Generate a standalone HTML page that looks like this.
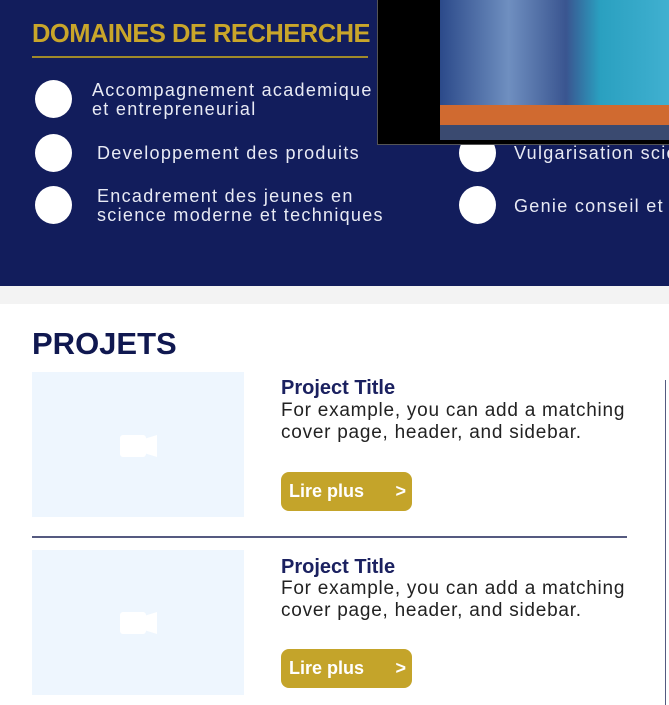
<!DOCTYPE html>
<html><head><style>
*{margin:0;padding:0;box-sizing:border-box}
body{width:669px;height:705px;overflow:hidden;background:#fff;font-family:"Liberation Sans",sans-serif;position:relative}
.a{position:absolute}
.clip{left:0;top:0;width:669px;height:705px;overflow:hidden}
.navy{left:0;top:0;width:669px;height:286px;background:#121d5c}
.gray{left:0;top:286px;width:669px;height:18px;background:#f3f3f3}
.c{width:37px;height:38px;border-radius:50%;background:#fff}
.t{color:#e8eaf4;font-size:18px;line-height:19px;font-weight:300;white-space:nowrap;letter-spacing:1.3px}
.ph{width:212px;height:145px;background:#eef6fe}
.pt{color:#1b2160;font-size:20px;font-weight:bold}
.pd{color:#222;font-size:19px;line-height:22px;white-space:nowrap;letter-spacing:0.75px}
.btn{width:131px;height:39px;background:#c4a42a;border-radius:8px;color:#fff;font-weight:bold;font-size:18px;line-height:39px;padding-left:8px}
.btn span{position:absolute;right:6px;top:0}
</style></head><body>
<div class="a clip">
<div class="a navy"></div>
<div class="a gray"></div>
<div class="a" style="left:32px;top:20px;color:#c9a62a;font-size:25.5px;font-weight:bold;letter-spacing:-0.5px">DOMAINES DE RECHERCHE</div>
<div class="a" style="left:32px;top:56px;width:336px;height:2px;background:#a08a2a"></div>
<div class="a c" style="left:35px;top:80px"></div>
<div class="a c" style="left:35px;top:134px"></div>
<div class="a c" style="left:35px;top:186px"></div>
<div class="a c" style="left:459px;top:134px"></div>
<div class="a c" style="left:459px;top:186px"></div>
<div class="a t" style="left:92px;top:81px">Accompagnement academique<br>et entrepreneurial</div>
<div class="a t" style="left:97px;top:144px">Developpement des produits</div>
<div class="a t" style="left:97px;top:187px">Encadrement des jeunes en<br>science moderne et techniques</div>
<div class="a t" style="left:514px;top:144px;width:155px;overflow:hidden">Vulgarisation scientifique</div>
<div class="a t" style="left:514px;top:197px;width:155px;overflow:hidden">Genie conseil et suivi</div>
<div class="a" style="left:377px;top:0;width:292px;height:145px;background:#000;border:1px solid #555;border-top:none;border-right:none"></div>
<div class="a" style="left:440px;top:0;width:229px;height:140px;background:linear-gradient(90deg,#2c4a8a 0%,#6f8fc0 30%,#3a5590 55%,#2aa0c0 70%,#40b0d0 100%)"></div>
<div class="a" style="left:440px;top:105px;width:229px;height:20px;background:#d06a30"></div>
<div class="a" style="left:440px;top:125px;width:229px;height:15px;background:#3a4a70"></div>
<div class="a" style="left:32px;top:326px;color:#101850;font-size:31px;font-weight:900">PROJETS</div>
<div class="a" style="left:665px;top:380px;width:1px;height:325px;background:#555a80"></div>
<div class="a ph" style="left:32px;top:372px"></div>
<div class="a" style="left:120px;top:435px;width:26px;height:22px;background:#fff;border-radius:3px"></div>
<div class="a" style="left:144px;top:435px;width:0;border-right:13px solid #fff;border-top:4px solid transparent;border-bottom:4px solid transparent;height:22px"></div>
<div class="a pt" style="left:281px;top:377px">Project Title</div>
<div class="a pd" style="left:281px;top:400px">For example, you can add a matching<br>cover page, header, and sidebar.</div>
<div class="a btn" style="left:281px;top:472px">Lire plus<span>&gt;</span></div>
<div class="a" style="left:32px;top:536px;width:595px;height:2px;background:#555a80"></div>
<div class="a ph" style="left:32px;top:550px"></div>
<div class="a" style="left:120px;top:612px;width:26px;height:22px;background:#fff;border-radius:3px"></div>
<div class="a" style="left:144px;top:612px;width:0;border-right:13px solid #fff;border-top:4px solid transparent;border-bottom:4px solid transparent;height:22px"></div>
<div class="a pt" style="left:281px;top:556px">Project Title</div>
<div class="a pd" style="left:281px;top:578px">For example, you can add a matching<br>cover page, header, and sidebar.</div>
<div class="a btn" style="left:281px;top:649px">Lire plus<span>&gt;</span></div>
</div>
</body></html>
